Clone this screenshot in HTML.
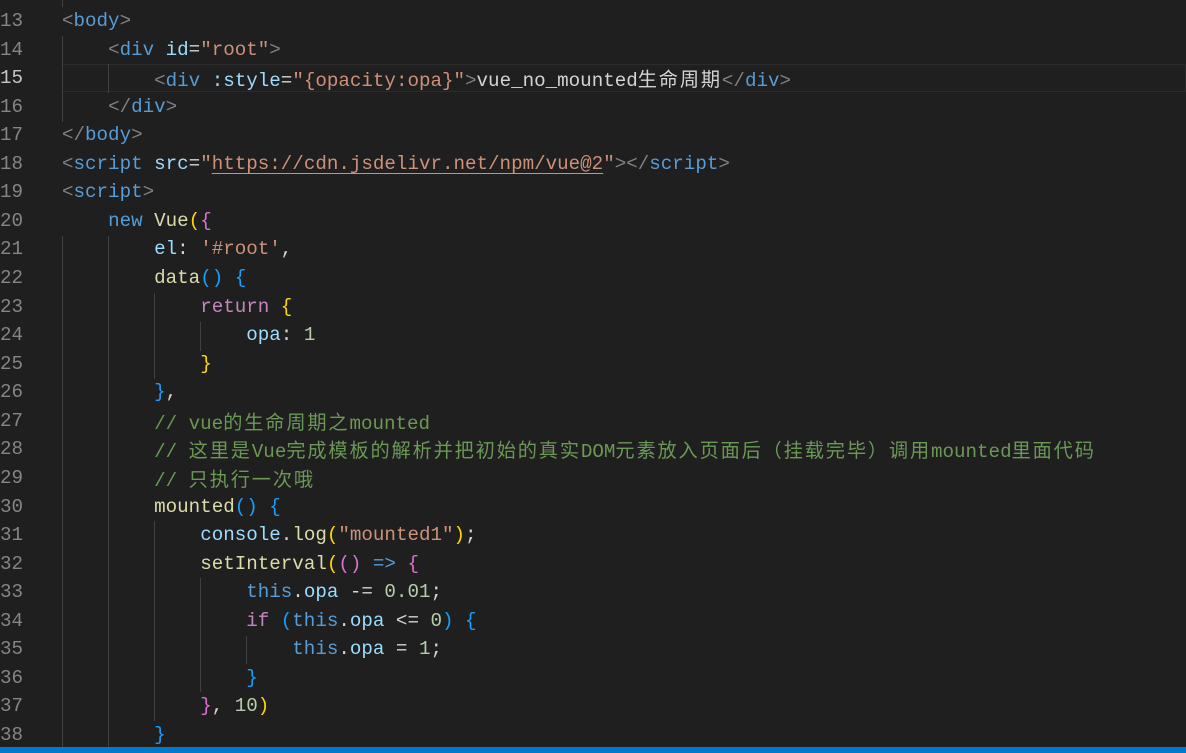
<!DOCTYPE html>
<html><head><meta charset="utf-8"><style>
html,body{margin:0;padding:0;background:#1f1f1f;width:1186px;height:753px;overflow:hidden}
.l{position:absolute;left:62px;height:28.56px;line-height:28.56px;font-family:"Liberation Mono","Noto Sans CJK SC",monospace;font-size:19.2px;white-space:pre;color:#d4d4d4}
.n{position:absolute;left:0;width:22px;text-align:right;height:28.56px;line-height:28.56px;font-family:"Liberation Mono",monospace;font-size:19.2px;color:#858585}
.n.c{color:#c6c6c6}
.g{position:absolute;width:1px;background:#404040}
.c1{color:#808080}.t{color:#569cd6}.a{color:#9cdcfe}.s{color:#ce9178}.k{color:#c586c0}.f{color:#dcdcaa}.num{color:#b5cea8}.cm{color:#6a9955}
.y{color:#ffd700}.p{color:#da70d6}.b{color:#179fff}
.z{letter-spacing:1.85px;font-family:"Noto Sans CJK SC",sans-serif}
.u{text-decoration:underline;text-underline-offset:4px}
</style></head><body>
<div style="position:absolute;left:62px;right:0;top:64px;height:28px;border:1px solid #2c2c2c;box-sizing:border-box"></div>
<div class="g" style="left:62px;top:0;height:7px"></div>
<div class="g" style="left:62px;top:36px;height:86px"></div>
<div class="g" style="left:108px;top:64px;height:29px"></div>
<div class="g" style="left:62px;top:236px;height:511px"></div>
<div class="g" style="left:108px;top:236px;height:511px"></div>
<div class="g" style="left:154px;top:293px;height:86px"></div>
<div class="g" style="left:200px;top:322px;height:29px"></div>
<div class="g" style="left:154px;top:521px;height:200px"></div>
<div class="g" style="left:200px;top:578px;height:114px"></div>
<div class="g" style="left:246px;top:636px;height:28px"></div>

<div class="n" style="top:-21.56px">12</div>
<div class="n" style="top:7px">13</div><div class="l" style="top:7px"><span class="c1">&lt;</span><span class="t">body</span><span class="c1">&gt;</span></div>
<div class="n" style="top:35.56px">14</div><div class="l" style="top:35.56px">    <span class="c1">&lt;</span><span class="t">div</span> <span class="a">id</span>=<span class="s">"root"</span><span class="c1">&gt;</span></div>
<div class="n c" style="top:64.12px">15</div><div class="l" style="top:64.12px">        <span class="c1">&lt;</span><span class="t">div</span> <span class="a">:style</span>=<span class="s">"{opacity:opa}"</span><span class="c1">&gt;</span>vue_no_mounted<span class="z">生命周期</span><span class="c1">&lt;/</span><span class="t">div</span><span class="c1">&gt;</span></div>
<div class="n" style="top:92.68px">16</div><div class="l" style="top:92.68px">    <span class="c1">&lt;/</span><span class="t">div</span><span class="c1">&gt;</span></div>
<div class="n" style="top:121.24px">17</div><div class="l" style="top:121.24px"><span class="c1">&lt;/</span><span class="t">body</span><span class="c1">&gt;</span></div>
<div class="n" style="top:149.8px">18</div><div class="l" style="top:149.8px"><span class="c1">&lt;</span><span class="t">script</span> <span class="a">src</span>=<span class="s">"<span class="u">https://cdn.jsdelivr.net/npm/vue@2</span>"</span><span class="c1">&gt;&lt;/</span><span class="t">script</span><span class="c1">&gt;</span></div>
<div class="n" style="top:178.36px">19</div><div class="l" style="top:178.36px"><span class="c1">&lt;</span><span class="t">script</span><span class="c1">&gt;</span></div>
<div class="n" style="top:206.92px">20</div><div class="l" style="top:206.92px">    <span class="t">new</span> <span class="f">Vue</span><span class="y">(</span><span class="p">{</span></div>
<div class="n" style="top:235.48px">21</div><div class="l" style="top:235.48px">        <span class="a">el</span>: <span class="s">'#root'</span>,</div>
<div class="n" style="top:264.04px">22</div><div class="l" style="top:264.04px">        <span class="f">data</span><span class="b">()</span> <span class="b">{</span></div>
<div class="n" style="top:292.6px">23</div><div class="l" style="top:292.6px">            <span class="k">return</span> <span class="y">{</span></div>
<div class="n" style="top:321.16px">24</div><div class="l" style="top:321.16px">                <span class="a">opa</span>: <span class="num">1</span></div>
<div class="n" style="top:349.72px">25</div><div class="l" style="top:349.72px">            <span class="y">}</span></div>
<div class="n" style="top:378.28px">26</div><div class="l" style="top:378.28px">        <span class="b">}</span>,</div>
<div class="n" style="top:406.84px">27</div><div class="l cm" style="top:406.84px">        // vue<span class="z">的生命周期之</span>mounted</div>
<div class="n" style="top:435.4px">28</div><div class="l cm" style="top:435.4px">        // <span class="z">这里是</span>Vue<span class="z">完成模板的解析并把初始的真实</span>DOM<span class="z">元素放入页面后（挂载完毕）调用</span>mounted<span class="z">里面代码</span></div>
<div class="n" style="top:463.96px">29</div><div class="l cm" style="top:463.96px">        // <span class="z">只执行一次哦</span></div>
<div class="n" style="top:492.52px">30</div><div class="l" style="top:492.52px">        <span class="f">mounted</span><span class="b">()</span> <span class="b">{</span></div>
<div class="n" style="top:521.08px">31</div><div class="l" style="top:521.08px">            <span class="a">console</span>.<span class="f">log</span><span class="y">(</span><span class="s">"mounted1"</span><span class="y">)</span>;</div>
<div class="n" style="top:549.64px">32</div><div class="l" style="top:549.64px">            <span class="f">setInterval</span><span class="y">(</span><span class="p">()</span> <span class="t">=&gt;</span> <span class="p">{</span></div>
<div class="n" style="top:578.2px">33</div><div class="l" style="top:578.2px">                <span class="t">this</span>.<span class="a">opa</span> -= <span class="num">0.01</span>;</div>
<div class="n" style="top:606.76px">34</div><div class="l" style="top:606.76px">                <span class="k">if</span> <span class="b">(</span><span class="t">this</span>.<span class="a">opa</span> &lt;= <span class="num">0</span><span class="b">)</span> <span class="b">{</span></div>
<div class="n" style="top:635.32px">35</div><div class="l" style="top:635.32px">                    <span class="t">this</span>.<span class="a">opa</span> = <span class="num">1</span>;</div>
<div class="n" style="top:663.88px">36</div><div class="l" style="top:663.88px">                <span class="b">}</span></div>
<div class="n" style="top:692.44px">37</div><div class="l" style="top:692.44px">            <span class="p">}</span>, <span class="num">10</span><span class="y">)</span></div>
<div class="n" style="top:721px">38</div><div class="l" style="top:721px">        <span class="b">}</span></div>
<div style="position:absolute;left:0;right:0;top:747px;height:6px;background:#007acc"></div>
</body></html>
